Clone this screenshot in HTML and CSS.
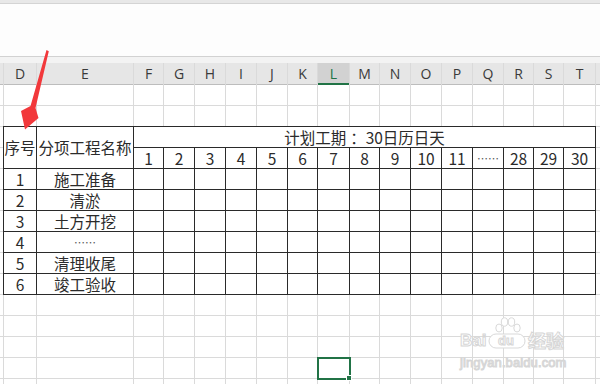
FILE: index.html
```html
<!DOCTYPE html>
<html lang="zh-CN">

<head>
    <meta charset="UTF-8">
    <meta name="viewport" content="width=device-width, initial-scale=1.0">
    <title>施工进度计划表</title>
    <link rel="stylesheet" href="styles.css">
</head>

<body>
    <!-- Ribbon / formula bar area -->
    <div class="topbar"></div>
    <div class="formula"></div>
    <div class="gap"></div>

    <!-- Worksheet -->
    <div class="sheet">
        <div class="cols">
            <div class="col"><div class="ch"></div></div>
            <div class="col"><div class="ch">D</div></div>
            <div class="col"><div class="ch">E</div></div>
            <div class="col"><div class="ch">F</div></div>
            <div class="col"><div class="ch">G</div></div>
            <div class="col"><div class="ch">H</div></div>
            <div class="col"><div class="ch">I</div></div>
            <div class="col"><div class="ch">J</div></div>
            <div class="col"><div class="ch">K</div></div>
            <div class="col"><div class="ch sel">L</div></div>
            <div class="col"><div class="ch">M</div></div>
            <div class="col"><div class="ch">N</div></div>
            <div class="col"><div class="ch">O</div></div>
            <div class="col"><div class="ch">P</div></div>
            <div class="col"><div class="ch">Q</div></div>
            <div class="col"><div class="ch">R</div></div>
            <div class="col"><div class="ch">S</div></div>
            <div class="col"><div class="ch">T</div></div>
            <div class="col last"><div class="ch"></div></div>
        </div>

        <!-- Schedule table -->
        <div class="plan">
            <div class="cell tall">序号</div>
            <div class="cell tall">分项工程名称</div>
            <div class="cell title">计划工期<span class="colon">：</span>30日历日天</div>

            <div class="cell">1</div>
            <div class="cell">2</div>
            <div class="cell">3</div>
            <div class="cell">4</div>
            <div class="cell">5</div>
            <div class="cell">6</div>
            <div class="cell">7</div>
            <div class="cell">8</div>
            <div class="cell">9</div>
            <div class="cell">10</div>
            <div class="cell">11</div>
            <div class="cell dots">……</div>
            <div class="cell">28</div>
            <div class="cell">29</div>
            <div class="cell">30</div>

            <div class="cell">1</div><div class="cell">施工准备</div>
            <div class="cell"></div><div class="cell"></div><div class="cell"></div><div class="cell"></div><div class="cell"></div>
            <div class="cell"></div><div class="cell"></div><div class="cell"></div><div class="cell"></div><div class="cell"></div>
            <div class="cell"></div><div class="cell"></div><div class="cell"></div><div class="cell"></div><div class="cell"></div>

            <div class="cell">2</div><div class="cell">清淤</div>
            <div class="cell"></div><div class="cell"></div><div class="cell"></div><div class="cell"></div><div class="cell"></div>
            <div class="cell"></div><div class="cell"></div><div class="cell"></div><div class="cell"></div><div class="cell"></div>
            <div class="cell"></div><div class="cell"></div><div class="cell"></div><div class="cell"></div><div class="cell"></div>

            <div class="cell">3</div><div class="cell">土方开挖</div>
            <div class="cell"></div><div class="cell"></div><div class="cell"></div><div class="cell"></div><div class="cell"></div>
            <div class="cell"></div><div class="cell"></div><div class="cell"></div><div class="cell"></div><div class="cell"></div>
            <div class="cell"></div><div class="cell"></div><div class="cell"></div><div class="cell"></div><div class="cell"></div>

            <div class="cell">4</div><div class="cell dots">……</div>
            <div class="cell"></div><div class="cell"></div><div class="cell"></div><div class="cell"></div><div class="cell"></div>
            <div class="cell"></div><div class="cell"></div><div class="cell"></div><div class="cell"></div><div class="cell"></div>
            <div class="cell"></div><div class="cell"></div><div class="cell"></div><div class="cell"></div><div class="cell"></div>

            <div class="cell">5</div><div class="cell">清理收尾</div>
            <div class="cell"></div><div class="cell"></div><div class="cell"></div><div class="cell"></div><div class="cell"></div>
            <div class="cell"></div><div class="cell"></div><div class="cell"></div><div class="cell"></div><div class="cell"></div>
            <div class="cell"></div><div class="cell"></div><div class="cell"></div><div class="cell"></div><div class="cell"></div>

            <div class="cell">6</div><div class="cell">竣工验收</div>
            <div class="cell"></div><div class="cell"></div><div class="cell"></div><div class="cell"></div><div class="cell"></div>
            <div class="cell"></div><div class="cell"></div><div class="cell"></div><div class="cell"></div><div class="cell"></div>
            <div class="cell"></div><div class="cell"></div><div class="cell"></div><div class="cell"></div><div class="cell"></div>
        </div>

        <!-- Active cell -->
        <div class="cursor"></div>
    </div>

    <!-- Red annotation arrow -->
    <svg class="arrow" width="60" height="140" viewBox="0 0 60 140">
        <polygon points="46.5,50 48.8,51.2 35.5,108 38.5,118 25,129.5 21,111 30.5,106" fill="#f2383b"/>
    </svg>

    <!-- Watermark -->
    <div class="watermark">
        <div class="wm-logo">
            <span class="wm-bai">Bai</span>
            <span class="wm-paw">
                <svg width="38" height="32" viewBox="0 0 38 32">
                    <g fill="#fff" stroke="#d9d9d9" stroke-width="1">
                        <ellipse cx="11" cy="11" rx="3.2" ry="4"/>
                        <ellipse cx="16.5" cy="5" rx="3.2" ry="4.2"/>
                        <ellipse cx="23.5" cy="5" rx="3.2" ry="4.2"/>
                        <ellipse cx="29" cy="11" rx="3.2" ry="4"/>
                        <rect x="1" y="17" width="36" height="14" rx="7"/>
                    </g>
                </svg>
                <span class="wm-du">du</span>
            </span>
            <span class="wm-jy">经验</span>
        </div>
        <div class="wm-url">jingyan.baidu.com</div>
    </div>
</body>

</html>
```

FILE: styles.css
```css
/* Base styles */
body {
    margin: 0;
    width: 600px;
    height: 384px;
    overflow: hidden;
    background-color: #fff;
    font-family: "Noto Sans CJK SC", "Noto Sans", sans-serif;
    color: #222;
    position: relative;
}

/* Top strip and formula area */
.topbar {
    height: 3px;
    background-color: #e8e8e8;
    border-bottom: 1px solid #d4d4d4;
}

.formula {
    height: 52px;
    background-color: #fdfdfd;
    border-bottom: 1px solid #d2d2d2;
}

.gap {
    height: 6px;
    background-color: #f3f3f3;
}

/* Worksheet: columns layer and table stacked in one grid cell */
.sheet {
    display: grid;
    height: 321px;
}

.sheet > * {
    grid-area: 1 / 1;
}

.cols {
    display: grid;
    grid-template-columns: 4px 33px 97px 30px 31px 31px 31px 31px 30px 32px 30px 31px 31px 31px 31px 30px 30px 32px 1fr;
    background: repeating-linear-gradient(to bottom, #fff 0, #fff 20px, #dadada 20px, #dadada 21px);
    background-position: 0 22px;
}

.col {
    border-right: 1px solid #dadada;
}

.col.last {
    border-right: none;
}

/* Column letters */
.ch {
    box-sizing: border-box;
    height: 22px;
    background-color: #e6e6e6;
    border-bottom: 1px solid #bdbdbd;
    font-family: "Open Sans", "Noto Sans", sans-serif;
    font-size: 14px;
    line-height: 21px;
    text-align: center;
    color: #3a3a3a;
}

.ch.sel {
    background-color: #d2d2d2;
    color: #217346;
    border-bottom: 2px solid #217346;
}

/* Schedule table */
.plan {
    align-self: start;
    justify-self: start;
    margin: 63px 0 0 3px;
    display: grid;
    grid-template-columns: 33px 97px 30px 31px 31px 31px 31px 30px 32px 30px 31px 31px 31px 31px 30px 30px 32px;
    grid-auto-rows: 21px;
    border-top: 1px solid #2a2a2a;
    border-left: 1px solid #2a2a2a;
    background-color: #fff;
}

.cell {
    box-sizing: border-box;
    border-right: 1px solid #2a2a2a;
    border-bottom: 1px solid #2a2a2a;
    font-size: 15.5px;
    line-height: 20px;
    text-align: center;
    white-space: nowrap;
    overflow: hidden;
    color: #2b2b2b;
}

.cell.tall {
    grid-row: span 2;
    line-height: 40px;
}

.cell.title {
    grid-column: span 15;
}

/* push the full-width colon towards the middle of its gap */
.colon {
    margin-left: 4px;
}

.cell.dots {
    font-size: 11px;
    color: #555;
}

/* Active cell */
.cursor {
    align-self: start;
    justify-self: start;
    margin: 294px 0 0 317px;
    width: 34px;
    height: 23px;
    box-sizing: border-box;
    border: 2px solid #217346;
    position: relative;
}

.cursor::after {
    content: "";
    position: absolute;
    right: -3px;
    bottom: -3px;
    width: 4px;
    height: 4px;
    background-color: #217346;
    border: 1px solid #fff;
}

/* Annotation arrow */
.arrow {
    position: absolute;
    left: 0;
    top: 0;
}

/* Watermark */
.watermark {
    position: absolute;
    left: 460px;
    top: 317px;
    width: 108px;
    font-family: "Liberation Sans", Arial, sans-serif;
    color: #fff;
    -webkit-text-stroke: 1px #d6d6d6;
}

.wm-logo {
    display: flex;
    align-items: flex-end;
    height: 32px;
}

.wm-bai {
    width: 28px;
    font-size: 17px;
    font-weight: bold;
    line-height: 16px;
}

.wm-paw {
    position: relative;
    width: 38px;
    height: 32px;
}

.wm-du {
    position: absolute;
    left: 10px;
    top: 16px;
    font-size: 13px;
    font-weight: bold;
    line-height: 15px;
}

.wm-jy {
    margin-left: 2px;
    font-family: "Noto Sans CJK SC", sans-serif;
    font-size: 18px;
    font-weight: bold;
    line-height: 17px;
}

.wm-url {
    font-size: 13px;
    line-height: 14px;
    margin-top: 7px;
    letter-spacing: 0.1px;
}
```
